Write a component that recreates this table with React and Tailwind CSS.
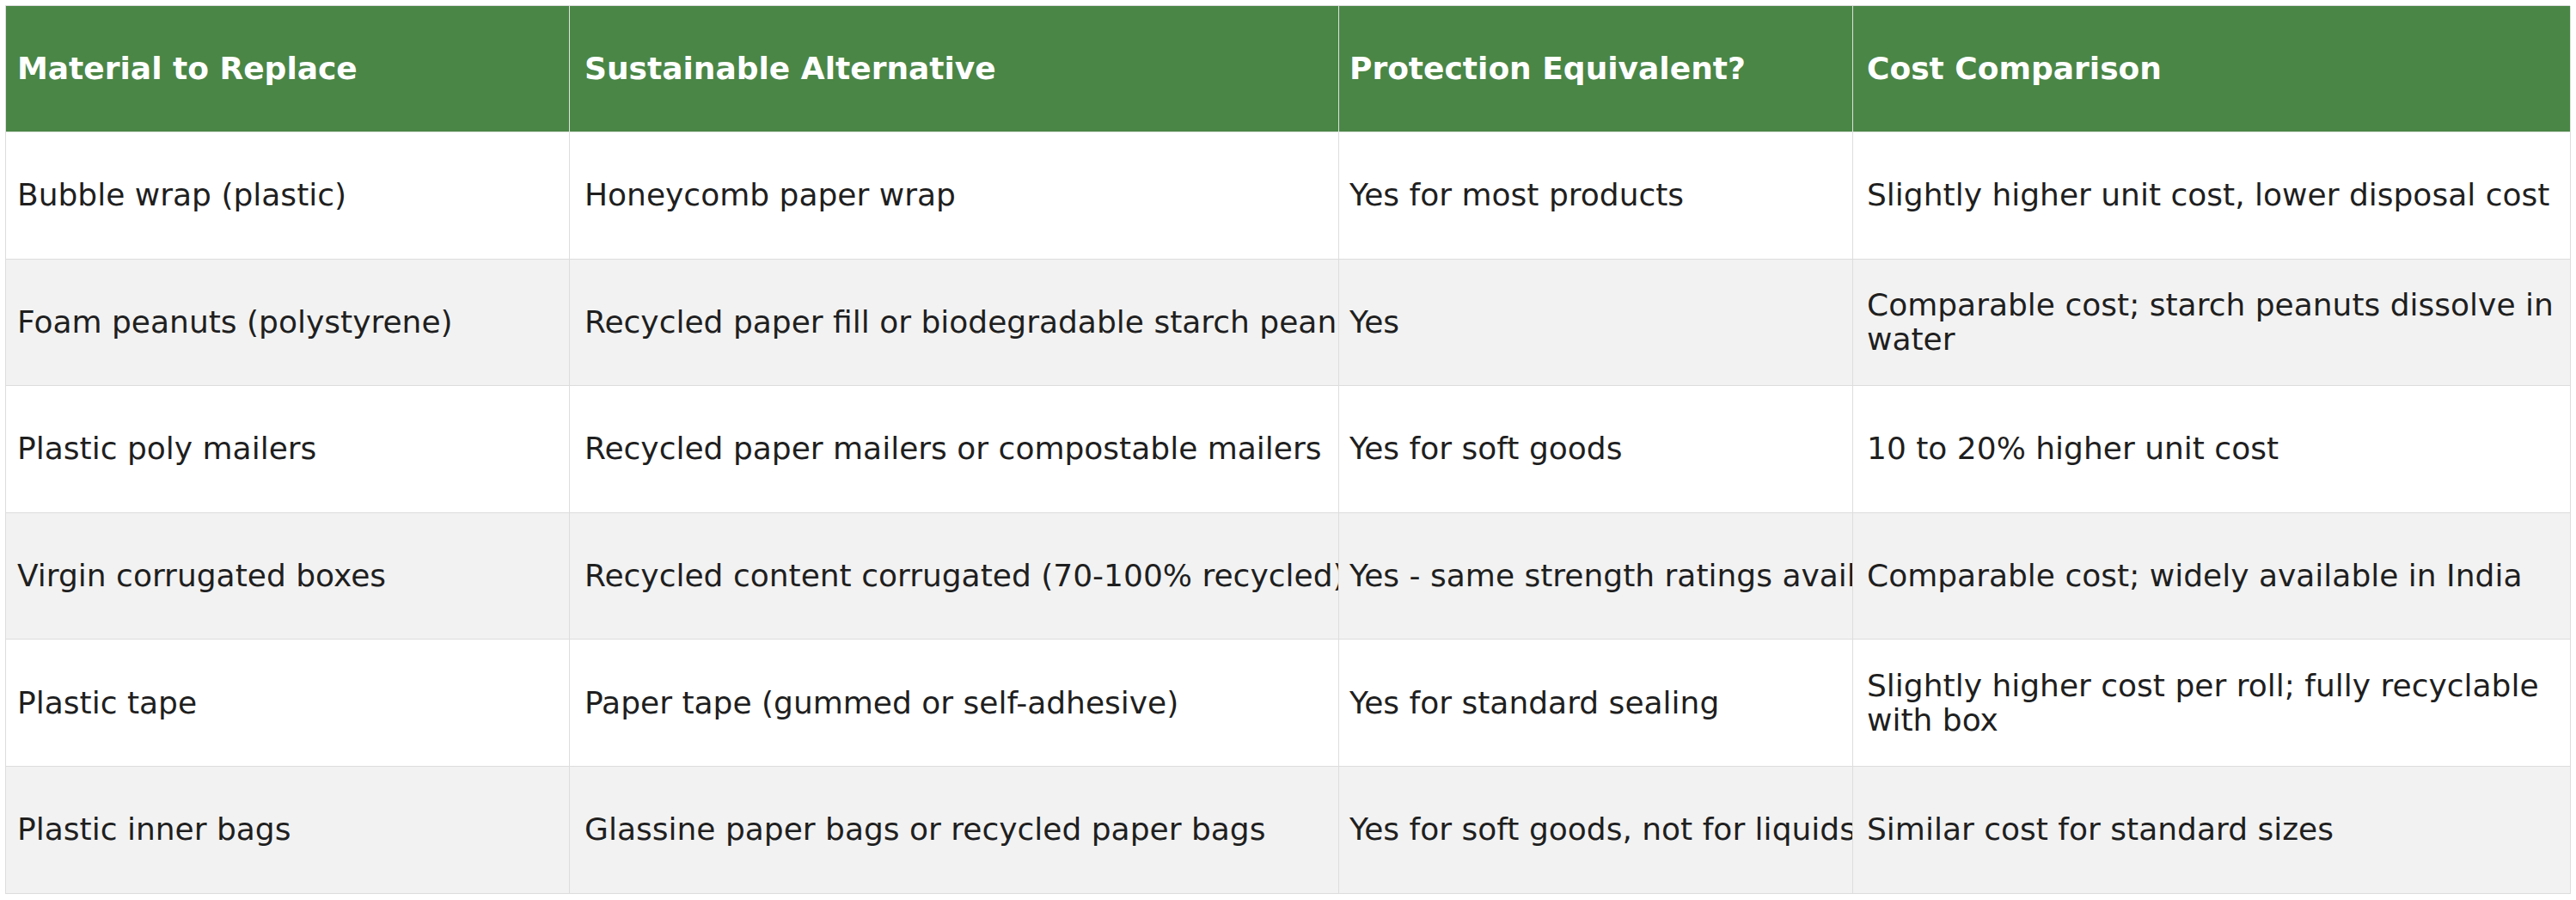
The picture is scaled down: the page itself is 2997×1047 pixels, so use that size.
import React from 'react';

const headers = ['Material to Replace', 'Sustainable Alternative', 'Protection Equivalent?', 'Cost Comparison'];

const rows = [
    ['Bubble wrap (plastic)', 'Honeycomb paper wrap', 'Yes for most products', 'Slightly higher unit cost, lower disposal cost'],
    ['Foam peanuts (polystyrene)', 'Recycled paper fill or biodegradable starch peanuts', 'Yes', 'Comparable cost; starch peanuts dissolve in water'],
    ['Plastic poly mailers', 'Recycled paper mailers or compostable mailers', 'Yes for soft goods', '10 to 20% higher unit cost'],
    ['Virgin corrugated boxes', 'Recycled content corrugated (70-100% recycled)', 'Yes - same strength ratings available', 'Comparable cost; widely available in India'],
    ['Plastic tape', 'Paper tape (gummed or self-adhesive)', 'Yes for standard sealing', 'Slightly higher cost per roll; fully recyclable with box'],
    ['Plastic inner bags', 'Glassine paper bags or recycled paper bags', 'Yes for soft goods, not for liquids', 'Similar cost for standard sizes'],
];

// per column left padding, last column wraps
const pad = ['pl-[13px]', 'pl-[17px]', 'pl-[12px]', 'pl-[16px] pr-[10px]'];

export default function App() {
    return (
        <div className="bg-white min-h-screen p-[6px] font-['DejaVu_Sans','Liberation_Sans',sans-serif]">
            <div className="w-[2984px] border-l border-t border-[#dddddd]">
                <div className="grid grid-cols-[656px_895px_598px_835px] h-[147px] bg-[#4a8646]">
                    {headers.map((h, i) => (
                        <div key={h} className={`flex items-center overflow-hidden whitespace-nowrap border-r border-b border-[#dde3dd] ${pad[i]} text-[36px] leading-[42px] font-bold text-white`}>
                            {h}
                        </div>
                    ))}
                </div>
                {rows.map((r, ri) => (
                    <div key={ri} className={`grid grid-cols-[656px_895px_598px_835px] h-[147.6px] ${ri % 2 === 1 ? 'bg-[#f2f2f2]' : 'bg-white'}`}>
                        {r.map((c, ci) => (
                            <div key={ci} className={`flex items-center overflow-hidden border-r border-b border-[#dddddd] ${pad[ci]} ${ci < 3 ? 'whitespace-nowrap' : ''} text-[36px] leading-[40px] text-[#1f1f1f]`}>
                                <span>{c}</span>
                            </div>
                        ))}
                    </div>
                ))}
            </div>
        </div>
    );
}
